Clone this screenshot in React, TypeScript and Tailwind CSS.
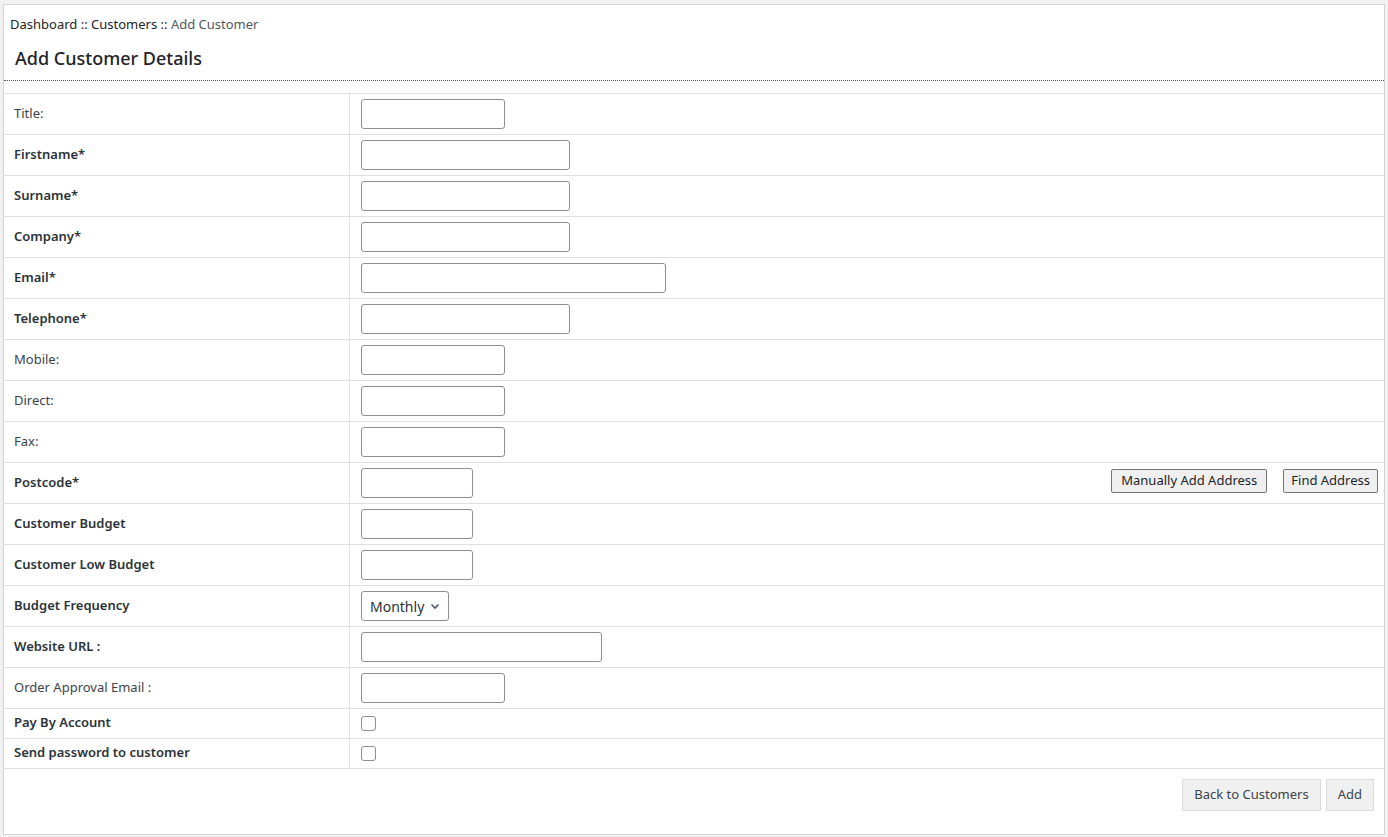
type Row = {
  label: string;
  bold?: boolean;
  kind: "input" | "select" | "check" | "postcode";
  w?: string;
};

const rows: Row[] = [
  { label: "Title:", kind: "input", w: "w-[144px]" },
  { label: "Firstname*", bold: true, kind: "input", w: "w-[209px]" },
  { label: "Surname*", bold: true, kind: "input", w: "w-[209px]" },
  { label: "Company*", bold: true, kind: "input", w: "w-[209px]" },
  { label: "Email*", bold: true, kind: "input", w: "w-[305px]" },
  { label: "Telephone*", bold: true, kind: "input", w: "w-[209px]" },
  { label: "Mobile:", kind: "input", w: "w-[144px]" },
  { label: "Direct:", kind: "input", w: "w-[144px]" },
  { label: "Fax:", kind: "input", w: "w-[144px]" },
  { label: "Postcode*", bold: true, kind: "postcode", w: "w-[112px]" },
  { label: "Customer Budget", bold: true, kind: "input", w: "w-[112px]" },
  { label: "Customer Low Budget", bold: true, kind: "input", w: "w-[112px]" },
  { label: "Budget Frequency", bold: true, kind: "select" },
  { label: "Website URL :", bold: true, kind: "input", w: "w-[241px]" },
  { label: "Order Approval Email :", kind: "input", w: "w-[144px]" },
  { label: "Pay By Account", bold: true, kind: "check" },
  { label: "Send password to customer", bold: true, kind: "check" },
];

function Field({ row }: { row: Row }) {
  if (row.kind === "check") {
    return (
      <span className="block w-[15px] h-[15px] rounded-[3px] border border-[#8c8f94] bg-white" />
    );
  }
  if (row.kind === "select") {
    return (
      <div className="flex items-center justify-between w-[88px] h-[30px] rounded-[3px] border border-[#8c8f94] pl-[8px] pr-[7px] text-[14px] text-[#2c3338]">
        <span>Monthly</span>
        <svg width="12" height="12" viewBox="0 0 12 12" fill="none" stroke="#50575e" strokeWidth="1.6">
          <path d="M2.5 4.5 L6 8 L9.5 4.5" />
        </svg>
      </div>
    );
  }
  const box = (
    <input
      className={`h-[30px] ${row.w} rounded-[3px] border border-[#8c8f94] bg-white outline-none`}
    />
  );
  if (row.kind === "postcode") {
    return (
      <div className="flex items-center justify-between w-full pr-[6px]">
        {box}
        <div className="flex items-center gap-[16px] -mt-[4px]">
          <button className="h-[24px] px-[9px] rounded-[2px] border border-[#767676] bg-[#efefef] text-[13px] text-[#1d2327]">
            Manually Add Address
          </button>
          <button className="h-[24px] px-[7px] rounded-[2px] border border-[#767676] bg-[#efefef] text-[13px] text-[#1d2327]">
            Find Address
          </button>
        </div>
      </div>
    );
  }
  return box;
}

export default function App() {
  return (
    <div
      className="min-h-[837px] bg-[#f1f1f1] pt-[4px] pl-[3px] pr-[3px] pb-[2px] text-[#3c434a]"
      style={{ fontFamily: "'Noto Sans', 'Open Sans', sans-serif" }}
    >
      <div className="h-[831px] bg-white border border-[#d4d4d4] flex flex-col">
        <div className="pl-[6px] pt-[10px] h-[33px] text-[13px] text-[#1d2327]">
          Dashboard :: Customers :: <span className="text-[#50575e]">Add Customer</span>
        </div>
        <h2 className="pl-[11px] pt-[7px] h-[42px] text-[18px] font-medium text-[#1d2327]">
          Add Customer Details
        </h2>
        <div className="border-b border-dotted border-[#555]" />
        <div className="h-[12px]" />
        <div className="border-t border-[#e0e0e0]">
          {rows.map((r) => (
            <div
              key={r.label}
              className={`flex border-b border-[#e0e0e0] ${r.kind === "check" ? "h-[30px]" : "h-[41px]"}`}
            >
              <div
                className={`w-[346px] shrink-0 border-r border-[#e0e0e0] pl-[10px] flex items-center text-[13px] ${
                  r.bold ? "font-semibold text-[#2c3338]" : "text-[#3c434a]"
                } ${r.kind === "check" ? "pb-[2px]" : ""}`}
              >
                {r.label}
              </div>
              <div className="flex-1 pl-[11px] flex items-center">
                <Field row={r} />
              </div>
            </div>
          ))}
        </div>
        <div className="flex justify-end gap-[5px] pr-[10px] pt-[10px]">
          <button className="h-[32px] px-[11px] border border-[#dcdcdc] bg-[#f0f0f0] text-[13px] text-[#3c434a]">
            Back to Customers
          </button>
          <button className="h-[32px] px-[11px] border border-[#dcdcdc] bg-[#f0f0f0] text-[13px] text-[#3c434a]">
            Add
          </button>
        </div>
      </div>
    </div>
  );
}
